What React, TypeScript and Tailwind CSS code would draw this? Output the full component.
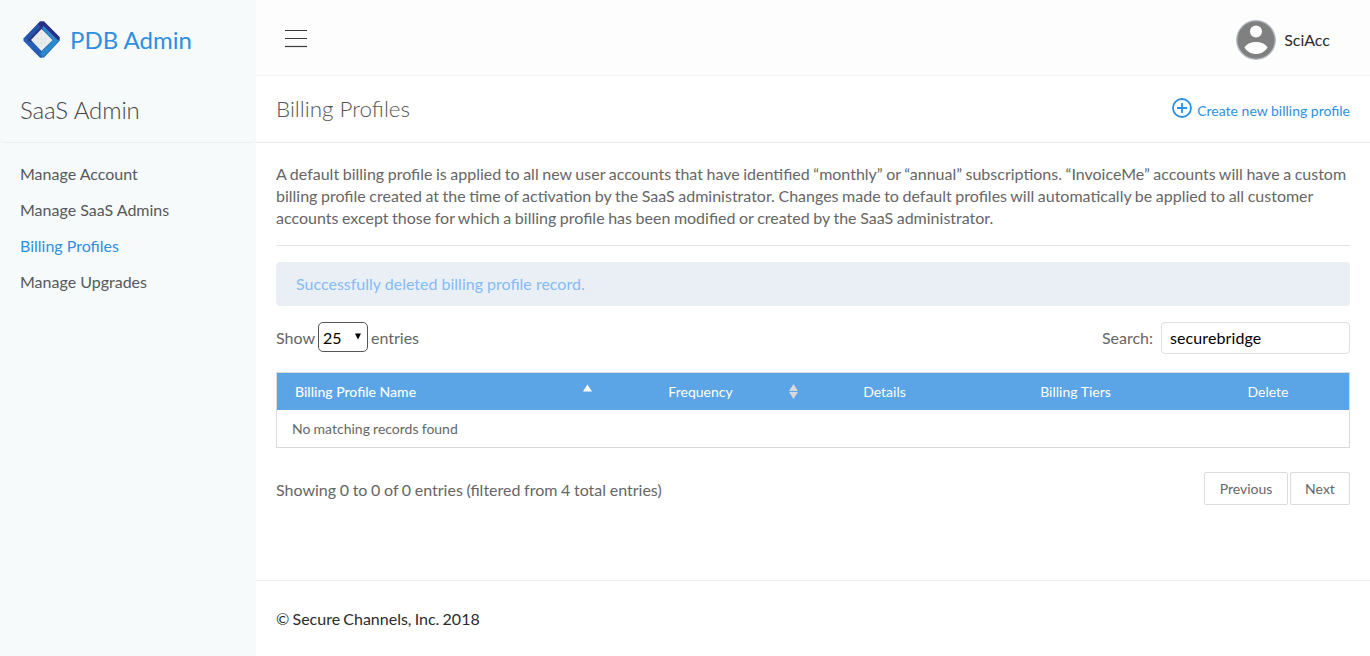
import React from "react";

const navItems = [
  { label: "Manage Account", active: false },
  { label: "Manage SaaS Admins", active: false },
  { label: "Billing Profiles", active: true },
  { label: "Manage Upgrades", active: false },
];

function Logo() {
  return (
    <svg width="37" height="37" viewBox="0 0 37 37" className="shrink-0">
      <path d="M17 .5h4L36.500 16v4L21 36.500h-4L.5 20v-2.500z" fill="#2660b4" />
      <path d="M17 .5h4L36.500 16v3.500l-2.500-1L20.500 5 18.500 7 14.500 3z" fill="#2a2f85" />
      <path d="M14.500 3 18.500 7 7.500 18.500 .5 18z" fill="#2553ab" />
      <path d="M18.500 5 22 7.500 8.500 21 4.500 19.500z" fill="#2b3488" />
      <path d="M20.500 5 34 18.500l2.500 1L19.500 36.500 17 33l13-14.500L19 7.500z" fill="#2a8acb" />
      <path d="M17 33 19.500 36.500H17L8 27.500l2.500-2z" fill="#275fb5" />
      <path d="M18.500 8 29.500 19 18.500 30 8 19z" fill="#eceeee" />
      <path d="M15 14v8M18.500 11v15M22 14v9M12 18h13M15 22h8" stroke="#d9dcde" strokeWidth=".6" />
    </svg>
  );
}

function Sidebar() {
  return (
    <aside className="w-64 shrink-0 bg-[#f6fafb]">
      <div className="flex h-[76px] items-center gap-[10px] pl-[23px] pt-[3px]">
        <Logo />
        <span className="whitespace-nowrap text-2xl leading-8 text-[#2e8fe0]">PDB Admin</span>
      </div>
      <div className="flex h-[67px] items-center rounded-b-[5px] border-b border-[#eceef1] pl-5 pt-0.5">
        <h2 className="text-2xl font-light tracking-[-0.1px] text-[#444]">SaaS Admin</h2>
      </div>
      <nav className="flex flex-col pl-5 pt-[13px]">
        {navItems.map((n) => (
          <a key={n.label} className={n.active ? "h-9 leading-9 text-[#2e8fe0]" : "h-9 leading-9 text-[#55595c]"}>
            {n.label}
          </a>
        ))}
      </nav>
    </aside>
  );
}

function TopBar() {
  return (
    <header className="flex h-[76px] items-center justify-between border-b border-[#f3f3f5] bg-[#fdfdfd] pl-[29px] pr-10">
      <svg width="22" height="19" viewBox="0 0 22 19" className="mt-0.5">
        <path d="M0 1.500h22M0 9.500h22" stroke="#3a3a3a" strokeWidth="1" />
        <path d="M0 17.500h22" stroke="#3a3a3a" strokeWidth="1.200" />
      </svg>
      <div className="flex items-center gap-2 pt-1">
        <svg width="40" height="40" viewBox="0 0 40 40">
          <circle cx="20" cy="20" r="19.300" fill="#808080" stroke="#b8bec8" strokeWidth="1.300" />
          <circle cx="20" cy="11.500" r="6" fill="#fff" />
          <path d="M8.500 27.500C11 23.500 15 22 20 22s9 1.500 11.500 5.500C29 31.500 25 34 20 34S11 31.500 8.500 27.500z" fill="#fff" />
        </svg>
        <span className="text-base text-[#292b2c]">SciAcc</span>
      </div>
    </header>
  );
}

function Controls() {
  return (
    <div className="mt-4 flex h-8 items-start justify-between text-[#666]">
      <div className="flex items-center">
        <span className="pt-0.5">Show</span>
        <span className="mx-[3px] flex h-[30px] w-[50px] items-center justify-between rounded-[5px] border border-[#555] bg-white pl-1 pr-1.5 pt-0.5 text-black">
          25
          <svg width="6" height="7" viewBox="0 0 6 7" className="mb-[3px]">
            <path d="M0 .5h6L3 6.500z" fill="#000" />
          </svg>
        </span>
        <span className="pt-0.5">entries</span>
      </div>
      <div className="flex items-center gap-2">
        <span>Search:</span>
        <span className="flex h-8 w-[189px] items-center rounded border border-[#dfdfdf] bg-white px-2 tracking-[0.1px] text-black">
          securebridge
        </span>
      </div>
    </div>
  );
}

function Table() {
  return (
    <div className="mt-[18px] h-[76px] border border-[#d8dbde] text-sm">
      <div className="grid h-[37px] grid-cols-[327px_193px_175px_207px_1fr] items-center bg-[#5ba4e6] text-white">
        <div className="flex items-center justify-between pl-[18px] pr-3">
          <span className="font-medium">Billing Profile Name</span>
          <svg width="9" height="16" viewBox="0 0 9 16">
            <path d="M4.500 .5 9 7.500H0z" fill="#fff" />
          </svg>
        </div>
        <div className="relative text-center">
          Frequency
          <svg width="9" height="16" viewBox="0 0 9 16" className="absolute -right-px top-0.5">
            <path d="M4.500 0 9 7H0zM4.500 15 9 8H0z" fill="#d8d8d8" />
          </svg>
        </div>
        <div className="text-center">Details</div>
        <div className="text-center">Billing Tiers</div>
        <div className="pl-2 text-center">Delete</div>
      </div>
      <div className="flex h-[37px] items-center pl-[15px] text-[#666] [word-spacing:-0.4px]">
        No matching records found
      </div>
    </div>
  );
}

export default function App() {
  return (
    <div className="flex h-[656px] w-[1370px] overflow-hidden bg-white font-['Lato',sans-serif] text-base">
      <Sidebar />
      <main className="flex min-w-0 flex-1 flex-col">
        <TopBar />
        <div className="flex h-[67px] items-center justify-between border-b border-[#e9ebf1] px-5">
          <h1 className="text-[22.4px] font-light text-[#555]">Billing Profiles</h1>
          <a className="flex items-center gap-[5px] pt-0.5 text-sm text-[#2e8fe0]">
            <svg width="20" height="20" viewBox="0 0 20 20" className="mb-1">
              <circle cx="10" cy="10" r="9" fill="none" stroke="#2e8fe0" strokeWidth="1.800" />
              <path d="M10 5v10M5 10h10" stroke="#2e8fe0" strokeWidth="1.800" />
            </svg>
            <span className="pt-0.5">Create new billing profile</span>
          </a>
        </div>
        <section className="px-5 pt-5">
          <p className="h-[83px] whitespace-nowrap border-b border-[#e3e4e5] leading-[22px] text-[#666] [word-spacing:-0.53px]">
            A default billing profile is applied to all new user accounts that have identified “monthly” or “annual” subscriptions. “InvoiceMe” accounts will have a custom
            <br />
            billing profile created at the time of activation by the SaaS administrator. Changes made to default profiles will automatically be applied to all customer
            <br />
            accounts except those for which a billing profile has been modified or created by the SaaS administrator.
          </p>
          <div className="mt-4 flex h-11 items-center rounded bg-[#eaeff6] pl-5 text-[#84bbf6]">
            Successfully deleted billing profile record.
          </div>
          <Controls />
          <Table />
          <div className="mt-6 flex h-[33px] items-start justify-between text-[#666]">
            <span className="leading-9 [word-spacing:-0.45px]">Showing 0 to 0 of 0 entries (filtered from 4 total entries)</span>
            <div className="flex gap-0.5 text-sm">
              <button className="h-[33px] w-[84px] rounded-xs border border-[#dcdcdc]">Previous</button>
              <button className="h-[33px] w-[60px] rounded-xs border border-[#dcdcdc]">Next</button>
            </div>
          </div>
        </section>
        <footer className="mt-[75px] flex flex-1 items-center border-t border-[#ececec] px-5 pb-px pt-0.5 text-[#292b2c] [word-spacing:-0.9px]">
          © Secure Channels, Inc. 2018
        </footer>
      </main>
    </div>
  );
}
